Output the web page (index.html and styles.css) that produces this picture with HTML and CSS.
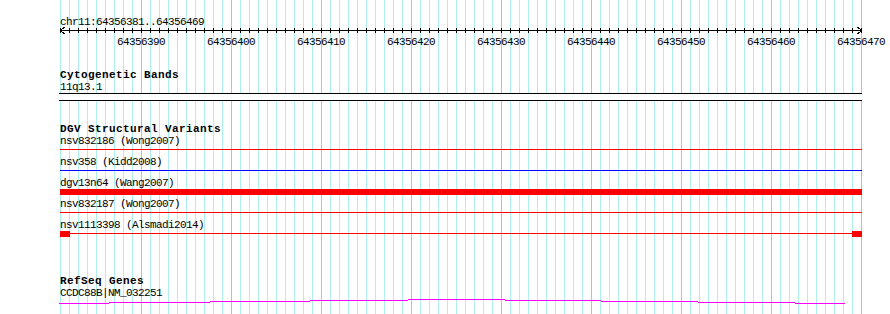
FILE: index.html
```html
<!DOCTYPE html>
<html lang="en">

<head>
    <meta charset="UTF-8">
    <meta name="viewport" content="width=device-width, initial-scale=1.0">
    <title>chr11:64356381..64356469</title>
    <link rel="stylesheet" href="styles.css">
</head>

<body>
<div class="view">
    <div class="ruler">
        <div class="ruler-title">chr11:64356381..64356469</div>
        <svg class="ruler-axis" width="802" height="9" shape-rendering="crispEdges">
            <defs>
                <pattern id="tick" width="9" height="9" patternUnits="userSpaceOnUse">
                    <rect x="0" y="2" width="1" height="5" fill="#000"></rect>
                </pattern>
            </defs>
            <rect x="0" y="0" width="802" height="9" fill="url(#tick)"></rect>
            <rect x="0" y="4" width="802" height="1" fill="#000"></rect>
            <polyline points="4.5,1 0.5,4.5 4.5,8" fill="none" stroke="#000"></polyline>
            <polyline points="797.5,1 801.5,4.5 797.5,8" fill="none" stroke="#000"></polyline>
        </svg>
        <div class="ruler-labels">
            <span>64356390</span>
            <span>64356400</span>
            <span>64356410</span>
            <span>64356420</span>
            <span>64356430</span>
            <span>64356440</span>
            <span>64356450</span>
            <span>64356460</span>
            <span>64356470</span>
        </div>
    </div>

    <div class="track track-cyto">
        <div class="track-title">Cytogenetic Bands</div>
        <div class="feature-label">11q13.1</div>
        <div class="band"></div>
    </div>

    <div class="track track-dgv">
        <div class="track-title">DGV Structural Variants</div>
        <div class="feature">
            <div class="feature-label">nsv832186 (Wong2007)</div>
            <div class="feature-glyph"><div class="line red"></div></div>
        </div>
        <div class="feature">
            <div class="feature-label">nsv358 (Kidd2008)</div>
            <div class="feature-glyph"><div class="line blue"></div></div>
        </div>
        <div class="feature">
            <div class="feature-label">dgv13n64 (Wang2007)</div>
            <div class="feature-glyph"><div class="bar red"></div></div>
        </div>
        <div class="feature">
            <div class="feature-label">nsv832187 (Wong2007)</div>
            <div class="feature-glyph"><div class="line red"></div></div>
        </div>
        <div class="feature">
            <div class="feature-label">nsv1113398 (Alsmadi2014)</div>
            <div class="feature-glyph split">
                <div class="block red"></div>
                <div class="line red"></div>
                <div class="block red"></div>
            </div>
        </div>
    </div>

    <div class="track track-genes">
        <div class="track-title">RefSeq Genes</div>
        <div class="feature-label">CCDC88B|NM_032251</div>
        <svg class="gene" width="786" height="5" shape-rendering="crispEdges">
            <g fill="#ff00ff">
                <rect x="0" y="4" width="50" height="1"></rect>
                <rect x="50" y="3" width="101" height="1"></rect>
                <rect x="151" y="2" width="100" height="1"></rect>
                <rect x="251" y="1" width="98" height="1"></rect>
                <rect x="349" y="0" width="97" height="1"></rect>
                <rect x="446" y="1" width="96" height="1"></rect>
                <rect x="542" y="2" width="97" height="1"></rect>
                <rect x="639" y="3" width="97" height="1"></rect>
                <rect x="736" y="4" width="50" height="1"></rect>
            </g>
        </svg>
    </div>
</div>
</body>

</html>
```

FILE: styles.css
```css
html,
body {
    margin: 0;
    background: #fff;
}

body {
    font-family: "Liberation Mono", monospace;
    font-size: 11px;
    letter-spacing: -0.6px;
    color: #000;
}

/* one light line per base, a darker one every ten */
.view {
    margin-left: 60px;
    width: 802px;
    min-height: 314px;
    padding-top: 15px;
    box-sizing: border-box;
    background-image:
        linear-gradient(to right, transparent 81px, #87cefa 81px, #87cefa 82px, transparent 82px),
        linear-gradient(to right, #afeeee 1px, transparent 1px);
    background-size: 90px 100%, 9px 100%;
}

.ruler-title,
.feature-label,
.track-title {
    height: 12px;
    line-height: 14px;
    white-space: nowrap;
}

.ruler-axis {
    display: block;
    margin-top: -1px;
}

.ruler-labels {
    display: flex;
    gap: 42px;
    height: 12px;
    line-height: 14px;
    margin-left: 57px;
    white-space: nowrap;
}

.ruler-labels span {
    width: 48px;
    text-align: center;
}

.track-title {
    font-weight: bold;
    letter-spacing: 0.4px;
}

.track-cyto {
    margin-top: 21px;
}

.band {
    margin: 1px 0 0 -1px;
    width: 803px;
    height: 6px;
    background: #fff;
    border-top: 1px solid #000;
    border-bottom: 1px solid #000;
}

.track-dgv {
    margin-top: 21px;
}

.feature-glyph {
    display: flex;
    align-items: flex-start;
    height: 9px;
}

.line {
    flex: 1;
    height: 1px;
    margin-top: 3px;
}

.bar {
    flex: 1;
    height: 6px;
    margin-top: 1px;
}

.block {
    width: 10px;
    height: 6px;
    margin-top: 1px;
}

.red {
    background: #ff0000;
}

.blue {
    background: #0000ff;
}

.track-genes {
    margin-top: 35px;
}

.gene {
    display: block;
    margin: 1px 0 0 -1px;
}
```
